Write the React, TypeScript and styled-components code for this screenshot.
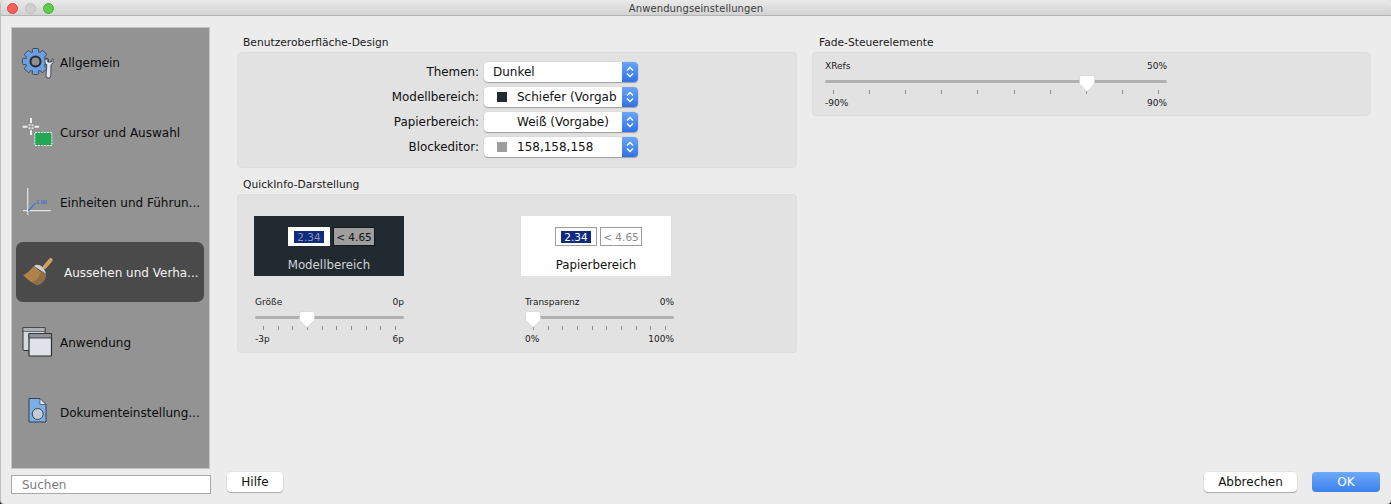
import React from "react";
import styled, { createGlobalStyle } from "styled-components";

const Global = createGlobalStyle`
  html, body { margin: 0; padding: 0; background: linear-gradient(#e4e4e4 0 50%, #2a2a2a 50%); }
  body { font-family: "DejaVu Sans", "Liberation Sans", sans-serif; color: #111; }
`;

const Win = styled.div`
  width: 1391px; height: 504px; background: #ececec; display: flex; flex-direction: column;
  border-radius: 5px 5px 4px 4px; overflow: hidden; border-left: 1px solid #bdbdbd; box-sizing: border-box;
`;
const TitleBar = styled.div`
  height: 16px; flex: none; box-sizing: border-box; position: relative; display: flex; align-items: center; justify-content: center;
  background: linear-gradient(#e9e9e9, #d3d3d3); border-bottom: 1px solid #b4b4b4; padding-top: 1px;
  font-size: 10px; color: #3c3c3c; letter-spacing: 0.1px;
`;
const Lights = styled.div`
  position: absolute; left: 5.5px; top: 2.5px; display: flex; gap: 7px;
`;
const Light = styled.span<{ $c: string; $b: string }>`
  width: 11px; height: 11px; box-sizing: border-box; border-radius: 50%; background: ${p => p.$c}; border: 0.5px solid ${p => p.$b};
`;
const Middle = styled.div`
  flex: none; height: 442px; margin-top: 11px; display: flex; padding-left: 10px;
`;
const Sidebar = styled.nav`
  width: 199px; flex: none; box-sizing: border-box; background: #939393; border: 1px solid #c4c4c4;
  display: flex; flex-direction: column;
`;
const NavItem = styled.div<{ $active?: boolean }>`
  height: 60px; width: 188px; margin: 5px 0 5px 4px; padding-left: 5px; box-sizing: border-box; flex: none; display: flex; align-items: center;
  gap: ${p => (p.$active ? 9 : 5)}px; border-radius: 7px; font-size: 12px; white-space: nowrap;
  background: ${p => (p.$active ? "#4a4a4a" : "transparent")};
  color: ${p => (p.$active ? "#f2f2f2" : "#0c0c0c")};
  &:first-child { margin-top: 4px; }
`;
const NavLabel = styled.span`
  padding-top: 2px;
`;
const NavIcon = styled.svg`
  width: 34px; height: 34px; flex: none; display: block;
`;
const Main = styled.main`
  flex: 1; min-width: 0; display: flex; gap: 15px; padding: 8px 0 0 27px; align-items: flex-start;
`;
const Column = styled.section<{ $w: number }>`
  width: ${p => p.$w}px; flex: none; display: flex; flex-direction: column;
`;
const Heading = styled.h2<{ $x?: number }>`
  margin: 1px 0 2px ${p => p.$x ?? 6}px; height: 14px; line-height: 14px; font-size: 10.7px; font-weight: 400; color: #1a1a1a;
`;
const Panel = styled.div<{ $h: number }>`
  height: ${p => p.$h}px; box-sizing: border-box; background: #e2e2e2; border: 1px solid #dedede; border-radius: 4px;
  margin-bottom: 9px;
`;
const Selects = styled.div`
  display: flex; flex-direction: column; gap: 5px; padding: 9px 0 0 0;
`;
const Row = styled.div`
  display: flex; align-items: center; height: 20px;
`;
const RowLabel = styled.label`
  width: 241px; text-align: right; font-size: 11.9px; color: #111; margin-right: 5px;
`;
const Select = styled.div`
  width: 154px; height: 20px; box-sizing: border-box; background: #fff; border-radius: 4px; position: relative;
  display: flex; align-items: center; padding-left: 9px; overflow: hidden; font-size: 12px; color: #111;
  box-shadow: 0 1px 1px rgba(0,0,0,.28), 0 0 0 .5px rgba(0,0,0,.06);
`;
const Swatch = styled.span<{ $c?: string }>`
  width: 10px; height: 10px; margin: 0 10px 0 4px; flex: none; background: ${p => p.$c || "transparent"};
`;
const SelectText = styled.span`
  white-space: nowrap;
`;
const Stepper = styled.span`
  position: absolute; right: 0; top: 0; bottom: 0; width: 16px;
  background: linear-gradient(#6ba6f8, #2f72e6);
  display: flex; align-items: center; justify-content: center;
`;
const Previews = styled.div`
  display: flex; padding: 21px 0 0 16px; gap: 117px;
`;
const PreviewCol = styled.div`
  width: 150px; display: flex; flex-direction: column;
`;
const Preview = styled.div<{ $dark?: boolean }>`
  width: 150px; height: 60px; box-sizing: border-box; background: ${p => (p.$dark ? "#212931" : "#fff")};
  display: flex; flex-direction: column; align-items: center; padding-top: 11px;
  color: ${p => (p.$dark ? "#d2d4d6" : "#111")}; font-size: 11.8px;
`;
const Chips = styled.div`
  display: flex; gap: 3px; height: 19px; margin: 0 0 12px 5px;
`;
const Chip = styled.div<{ $bg: string; $bd: string; $fg: string }>`
  width: 42px; height: 19px; box-sizing: border-box; background: ${p => p.$bg}; border: 1px solid ${p => p.$bd};
  color: ${p => p.$fg}; font-size: 10.5px; display: flex; align-items: center; justify-content: center;
`;
const Hl = styled.span<{ $fg: string }>`
  background: #102a7e; color: ${p => p.$fg}; padding: 0 3px; line-height: 12px;
`;
const SliderBox = styled.div`
  display: flex; flex-direction: column; width: 100%;
`;
const SliderText = styled.div`
  display: flex; justify-content: space-between; font-size: 9px; color: #1a1a1a; height: 12px; line-height: 12px;
`;
const TrackWrap = styled.div`
  height: 10px; margin-top: 4px; position: relative; display: flex; align-items: center;
`;
const Track = styled.div`
  width: 100%; height: 3px; border-radius: 2px; background: #b0b0b0;
`;
const Thumb = styled.svg<{ $f: number }>`
  position: absolute; top: -1px; width: 16px; height: 17px; left: calc((100% - 16px) * ${p => p.$f});
`;
const Ticks = styled.div`
  display: flex; justify-content: space-between; padding: 0 8px; margin: 4px 0 3px; height: 4px;
`;
const Tick = styled.i`
  display: block; width: 1px; height: 4px; background: #8e8e8e;
`;
const SliderWrap = styled.div<{ $x: number }>`
  margin: 20px 0 0 ${p => p.$x}px; width: 149px;
`;
const FadeWrap = styled.div`
  padding: 7px 0 0 12px; width: 342px;
`;
const Footer = styled.footer`
  flex: none; height: 35px; box-sizing: border-box; display: flex; align-items: flex-start; padding: 3px 11px 0 10px;
`;
const Search = styled.input`
  width: 200px; height: 19px; margin-top: 3px; box-sizing: border-box; border: 1.5px solid #a8a8a8; background: #fff;
  font: 12px "DejaVu Sans", sans-serif; padding: 0 0 0 10px; color: #111;
  &::placeholder { color: #7d7d7d; opacity: 1; }
`;
const Btn = styled.button<{ $primary?: boolean; $w: number }>`
  width: ${p => p.$w}px; height: 20px; border: 0; border-radius: 4px; padding: 0; font: 12px "DejaVu Sans", sans-serif;
  background: ${p => (p.$primary ? "linear-gradient(#6eaafa, #3c80ee)" : "#fff")};
  color: ${p => (p.$primary ? "#fff" : "#111")};
  box-shadow: ${p => (p.$primary ? "none" : "0 1px 1px rgba(0,0,0,.25), 0 0 0 .5px rgba(0,0,0,.07)")};
`;
const HelpBtn = styled(Btn)` margin-left: 16px; `;
const Spacer = styled.div` flex: 1; `;
const CancelBtn = styled(Btn)` margin-right: 15px; `;

const Chev = () => (
  <svg width="10" height="14" viewBox="0 0 10 14" fill="none" stroke="#fff" strokeWidth="1.3">
    <path d="M2 5.5 L5 2.5 L8 5.5 M2 8.5 L5 11.5 L8 8.5" />
  </svg>
);

const Slider = ({ name, value, min, max, at }: { name: string; value: string; min: string; max: string; at: number }) => (
  <SliderBox>
    <SliderText><span>{name}</span><span>{value}</span></SliderText>
    <TrackWrap>
      <Track />
      <Thumb $f={at / 9} viewBox="0 0 16 17">
        <path d="M2.5.5h11a2 2 0 0 1 2 2v6.5L8 16.5.5 9V2.5a2 2 0 0 1 2-2z" fill="#fff" stroke="#cfcfcf" strokeWidth=".6" />
      </Thumb>
    </TrackWrap>
    <Ticks>{Array.from({ length: 10 }, (_, i) => <Tick key={i} />)}</Ticks>
    <SliderText><span>{min}</span><span>{max}</span></SliderText>
  </SliderBox>
);

const GearIcon = () => (
  <NavIcon viewBox="0 0 34 34">
    <g transform="translate(14.5 16.5)">
      {[0, 45, 90, 135, 180, 225, 270, 315].map(a => (
        <rect key={a} x="-3.2" y="-13" width="6.4" height="6" rx="1.2" fill="#6d9fe2" stroke="#39424e" strokeWidth=".9" transform={`rotate(${a})`} />
      ))}
      <circle r="9.4" fill="#6d9fe2" />
      <circle r="5" fill="#8f8f8f" stroke="#262b33" strokeWidth="2" />
    </g>
    <path d="M24 13.5v4.5l1.8 1.8-.8 10.7a2.4 2.4 0 0 0 4.8.3l.2-11 2-2v-4.3l-1.6 1.4v2.1h-3.6v-2.1z" fill="#e2e6ea" stroke="#3a3f46" strokeWidth=".9" strokeLinejoin="round" />
  </NavIcon>
);
const CursorIcon = () => (
  <NavIcon viewBox="0 0 34 34">
    <path d="M1.7 11.7H18M10 3v17" stroke="#eee" strokeWidth="2" fill="none" />
    <path d="M7 8.700h6v6H7z M7 11.700h6 M10 8.700v6" stroke="#777" strokeWidth=".7" fill="#ddd" />
    <rect x="13.800" y="17.500" width="17" height="13" fill="#22a855" stroke="#f1f1f1" strokeWidth="1" strokeDasharray="2 1" />
  </NavIcon>
);
const ChartIcon = () => (
  <NavIcon viewBox="0 0 34 34">
    <path d="M6.7 3v27M2 25.7h27.7" stroke="#e6e6e6" strokeWidth="1.2" fill="none" />
    <path d="M7 25.500c3-1 4-5 8-7.500" stroke="#3f74d0" strokeWidth="1.4" fill="none" />
    <text x="15" y="19" fontSize="5.6" fontWeight="700" fill="#3f74d0" fontFamily="Liberation Sans, sans-serif">1.00</text>
  </NavIcon>
);
const BrushIcon = () => (
  <NavIcon viewBox="0 0 34 34">
    <path d="M29.7 5l-6 7" stroke="#d4a060" strokeWidth="4" strokeLinecap="round" />
    <path d="M13 11c3-3 10-1 12 8z" fill="#cbd1d7" />
    <path d="M13 11C8 16 6 19 2 20c4 4 10 9 15 10 5-2 8-6 8-11-4-1-8-4-12-8z" fill="#b08248" />
    <path d="M17 30c5-2 8-6 8-11l-5-2.500C18 22 16 26 11 27z" fill="#8f6f48" />
  </NavIcon>
);
const WindowsIcon = () => (
  <NavIcon viewBox="0 0 34 34">
    <rect x="2" y="2.500" width="22" height="23" rx="1" fill="#d5d8de" stroke="#333" strokeWidth="1" />
    <rect x="2" y="2.500" width="22" height="4" fill="#aab0b8" stroke="#333" strokeWidth=".6" />
    <rect x="8" y="8.500" width="22.500" height="22.500" rx="1" fill="#dfe2e8" stroke="#2d2d2d" strokeWidth="1.2" />
    <rect x="8" y="8.500" width="22.500" height="4.500" fill="#8d9198" stroke="#2d2d2d" strokeWidth=".8" />
  </NavIcon>
);
const DocIcon = () => (
  <NavIcon viewBox="0 0 34 34">
    <path d="M8 3.500h11l6 6v17.500H8z" fill="#7daee8" stroke="#35404e" strokeWidth="1" />
    <path d="M19 3.500v6h6z" fill="#e8eef6" stroke="#35404e" strokeWidth=".7" />
    <circle cx="16.700" cy="19" r="5.500" fill="#c6ccd3" stroke="#3a4350" strokeWidth="1" />
  </NavIcon>
);

const items: [string, React.FC, boolean?][] = [
  ["Allgemein", GearIcon],
  ["Cursor und Auswahl", CursorIcon],
  ["Einheiten und Führun...", ChartIcon],
  ["Aussehen und Verha...", BrushIcon, true],
  ["Anwendung", WindowsIcon],
  ["Dokumenteinstellung...", DocIcon],
];
const selects: [string, string, string?][] = [
  ["Themen:", "Dunkel"],
  ["Modellbereich:", "Schiefer (Vorgab", "#212931"],
  ["Papierbereich:", "Weiß (Vorgabe)", "#fff"],
  ["Blockeditor:", "158,158,158", "#9e9e9e"],
];

export default function App() {
  return (
    <>
      <Global />
      <Win>
        <TitleBar>
          <Lights>
            <Light $c="#f5625a" $b="#e0473f" />
            <Light $c="#cfcfcf" $b="#bcbcbc" />
            <Light $c="#5ecb4a" $b="#46b035" />
          </Lights>
          Anwendungseinstellungen
        </TitleBar>
        <Middle>
          <Sidebar>
            {items.map(([label, Icon, active]) => (
              <NavItem key={label} $active={active}><Icon /><NavLabel>{label}</NavLabel></NavItem>
            ))}
          </Sidebar>
          <Main>
            <Column $w={560}>
              <Heading>Benutzeroberfläche-Design</Heading>
              <Panel $h={116}>
                <Selects>
                  {selects.map(([l, v, c]) => (
                    <Row key={l}>
                      <RowLabel>{l}</RowLabel>
                      <Select>
                        {c && <Swatch $c={c} />}
                        <SelectText>{v}</SelectText>
                        <Stepper><Chev /></Stepper>
                      </Select>
                    </Row>
                  ))}
                </Selects>
              </Panel>
              <Heading>QuickInfo-Darstellung</Heading>
              <Panel $h={159}>
                <Previews>
                  <PreviewCol>
                    <Preview $dark>
                      <Chips>
                        <Chip $bg="#fff" $bd="#fff" $fg="#8a93a8"><Hl $fg="#8a93a8">2.34</Hl></Chip>
                        <Chip $bg="#9e9e9e" $bd="#14181d" $fg="#111">&lt; 4.65</Chip>
                      </Chips>
                      Modellbereich
                    </Preview>
                    <SliderWrap $x={1}><Slider name="Größe" value="0p" min="-3p" max="6p" at={3} /></SliderWrap>
                  </PreviewCol>
                  <PreviewCol>
                    <Preview>
                      <Chips>
                        <Chip $bg="#fff" $bd="#9c9c9c" $fg="#fff"><Hl $fg="#fff">2.34</Hl></Chip>
                        <Chip $bg="#fff" $bd="#9c9c9c" $fg="#8a8a8a">&lt; 4.65</Chip>
                      </Chips>
                      Papierbereich
                    </Preview>
                    <SliderWrap $x={4}><Slider name="Transparenz" value="0%" min="0%" max="100%" at={0} /></SliderWrap>
                  </PreviewCol>
                </Previews>
              </Panel>
            </Column>
            <Column $w={559}>
              <Heading $x={7}>Fade-Steuerelemente</Heading>
              <Panel $h={64}>
                <FadeWrap><Slider name="XRefs" value="50%" min="-90%" max="90%" at={7} /></FadeWrap>
              </Panel>
            </Column>
          </Main>
        </Middle>
        <Footer>
          <Search placeholder="Suchen" />
          <HelpBtn $w={56}>Hilfe</HelpBtn>
          <Spacer />
          <CancelBtn $w={93}>Abbrechen</CancelBtn>
          <Btn $primary $w={68}>OK</Btn>
        </Footer>
      </Win>
    </>
  );
}
